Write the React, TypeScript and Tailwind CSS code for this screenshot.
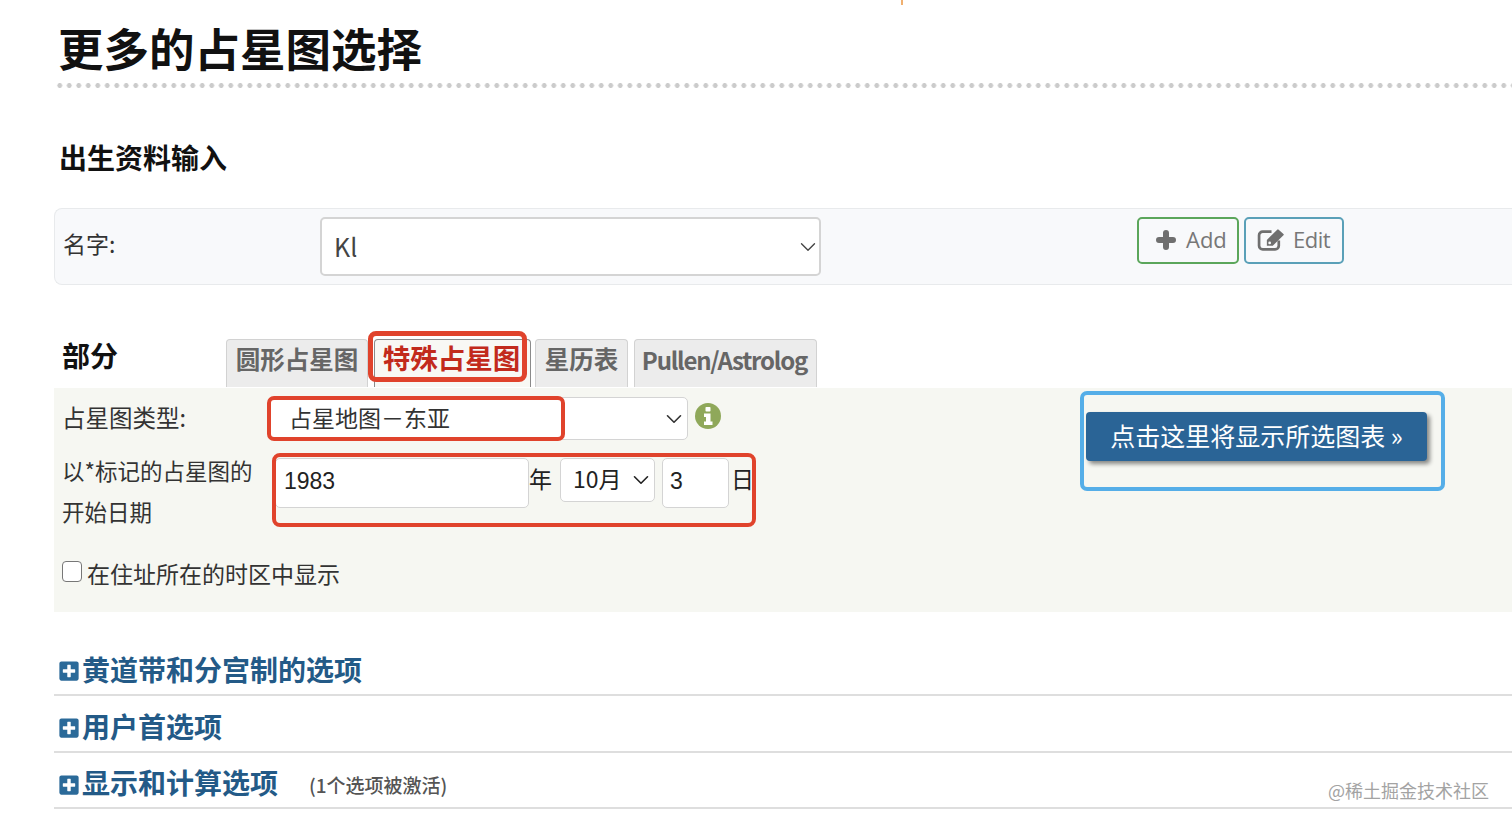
import { ChevronDown } from "lucide-react";
import { FaPlusSquare } from "react-icons/fa";

const cjk = "font-['Noto_Sans_CJK_SC','Noto_Sans',sans-serif]";

function Tab({ label, className }: { label: string; className: string }) {
  return (
    <div
      className={`flex h-[48px] items-center justify-center rounded-t-[4px] border border-b-0 font-bold leading-none ${className}`}
    >
      {label}
    </div>
  );
}

function Section({ label, note, h }: { label: string; note?: string; h: string }) {
  return (
    <div className={`flex items-center border-b-2 border-[#dedede] pl-[4px] pt-[4px] ${h}`}>
      <FaPlusSquare className="mt-[5px] h-[22px] w-[22px] text-[#2b6a99]" />
      <span className="ml-[2px] text-[28px] font-bold leading-none text-[#235a87]">{label}</span>
      {note && (
        <span className="ml-[31px] mt-[4px] text-[19px] font-medium leading-none text-[#555]">{note}</span>
      )}
    </div>
  );
}

function InfoIcon() {
  return (
    <svg viewBox="0 0 26 26" className="ml-[7px] mt-[6px] h-[26px] w-[26px]">
      <circle cx="13" cy="13" r="13" fill="#8fa85a" />
      <rect x="10.5" y="4" width="5" height="4.5" rx="0.8" fill="#fff" />
      <path d="M9 10.5h6.5v8H17.500v3.500H9v-3.500h2v-4.500H9z" fill="#fff" />
    </svg>
  );
}

function PlusIcon() {
  return (
    <svg viewBox="0 0 20 20" className="h-[20px] w-[20px]">
      <path d="M10 3v14M3 10h14" stroke="#6f6f6f" strokeWidth="6" strokeLinecap="round" fill="none" />
    </svg>
  );
}

function EditIcon() {
  return (
    <svg viewBox="0 0 27 22" className="-ml-[1px] h-[23px] w-[28px]">
      <path
        d="M14 3.500H5.500a3.500 3.500 0 0 0-3.500 3.500v10a3.500 3.500 0 0 0 3.500 3.500h12a3.500 3.500 0 0 0 3.500-3.500v-5"
        stroke="#6f6f6f"
        strokeWidth="2.600"
        fill="none"
      />
      <path d="M9.500 11.500 19.500 1.500a1 1 0 0 1 1.400 0l4.600 4.100a1 1 0 0 1 0 1.400L15.200 17H9.500z" fill="#6f6f6f" />
      <circle cx="12.200" cy="14.300" r="1.300" fill="#f8f9fb" />
    </svg>
  );
}

export default function App() {
  return (
    <div className={`relative h-[825px] w-[1512px] overflow-hidden bg-white text-[#222] ${cjk}`}>
      <div className="absolute left-[901px] top-0 h-[5px] w-[2px] bg-[#f0b070]" />

      <div className="pl-[54px]">
        <div className="pt-[20px]">
          <h1 className="ml-[4px] text-[45.500px] font-bold leading-[55px] text-[#111]">更多的占星图选择</h1>
          <div className="ml-[1px] mt-[8px] h-[5px] bg-[radial-gradient(circle,#cbcbcb_2.200px,transparent_2.700px)] bg-[length:9.5px_5px] bg-repeat-x" />
        </div>

        <h2 className="ml-[5px] mt-[49px] text-[28px] font-bold leading-[40px] text-[#111]">出生资料输入</h2>

        <div className="mt-[31px] flex h-[77px] rounded-l-[8px] border border-r-0 border-[#e8eaec] bg-[#f8f9fb] pl-[8px] pt-[8px]">
          <div className="w-[257px] pt-[11px] text-[23px] leading-[30px] text-[#333]">名字:</div>
          <div className="flex h-[59px] w-[501px] items-center justify-between rounded-[5px] border-2 border-[#d4d4d4] bg-white pl-[12px] text-[25px] text-[#444]">
            Kl
            <ChevronDown className="-mr-[2px] h-[26px] w-[26px] text-[#444]" strokeWidth={1.25} />
          </div>
          <div className="ml-[316px] flex gap-[5px] font-['Open_Sans',sans-serif] text-[22px] text-[#777]">
            <div className="flex h-[47px] w-[102px] items-center rounded-[5px] border-2 border-[#5ba65b] pb-[2px] pl-[17px]">
              <PlusIcon />
              <span className="ml-[10px]">Add</span>
            </div>
            <div className="flex h-[47px] w-[100px] items-center rounded-[5px] border-2 border-[#5aa0b8] pb-[2px] pl-[12px]">
              <EditIcon />
              <span className="ml-[8px] tracking-[-0.5px]">Edit</span>
            </div>
          </div>
        </div>

        <div className="mt-[54px] flex h-[49px]">
          <div className="ml-[8px] -mt-[1px] w-[164px] text-[28px] font-bold leading-[34px] text-[#111]">部分</div>
          <div className="relative flex">
            <Tab label="圆形占星图" className="w-[142px] border-[#d2d2d2] bg-[#ececec] pb-[8px] text-[24.500px] text-[#666]" />
            <Tab label="特殊占星图" className="ml-[6px] w-[157px] border-[#8a8a8a] bg-[#f8f8f4] pb-[11px] pr-[2px] text-[27.500px] text-[#c22a1c]" />
            <Tab label="星历表" className="ml-[4px] w-[93px] border-[#d2d2d2] bg-[#ececec] pb-[8px] text-[24.500px] text-[#666]" />
            <Tab label="Pullen/Astrolog" className="ml-[6px] w-[183px] border-[#d2d2d2] bg-[#ececec] pb-[8px] pr-[2px] text-[24px] tracking-[-1.200px] text-[#666]" />
            <div className="absolute left-[142px] top-[-8px] h-[51px] w-[159px] rounded-[8px] border-[5px] border-[#e0432c]" />
          </div>
        </div>

        <div className="flex h-[224px] bg-[#f6f7f2] pl-[8px]">
          <div className="w-[1018px]">
            <div className="flex pt-[9px]">
              <div className="w-[206px] pt-[4px] text-[23.500px] leading-[32px] text-[#333]">占星图类型:</div>
              <div className="relative flex h-[43px] w-[420px] items-center justify-between rounded-[5px] border border-[#d4d4d4] bg-white pl-[20px] text-[23px] text-[#333]">
                <span className="pb-[3px]">占星地图－东亚</span>
                <ChevronDown className="h-[26px] w-[26px] text-[#333]" strokeWidth={1.5} />
                <div className="absolute left-[-2px] top-[-2px] h-[45px] w-[298px] rounded-[7px] border-[4px] border-[#e0432c]" />
              </div>
              <InfoIcon />
            </div>

            <div className="mt-[13px] flex">
              <div className="-mt-[3px] w-[211px] text-[22.500px] leading-[41px] text-[#333]">
                以*标记的占星图的
                <br />
                开始日期
              </div>
              <div className="relative flex h-[70px] w-[484px] items-start pl-[2px] pt-[5px] text-[23px] text-[#222]">
                <div className="absolute left-[-1px] top-0 h-[74px] w-[484px] rounded-[8px] border-[4px] border-[#e0432c]" />
                <div className="flex h-[50px] w-[254px] items-center rounded-[5px] border border-[#d4d4d4] bg-white pb-[4px] pl-[8px] font-['Liberation_Sans',sans-serif] text-[23px]">
                  1983
                </div>
                <span className="mt-[4px] leading-[32px]">年</span>
                <div className="ml-[8px] flex h-[44px] w-[95px] items-center justify-between rounded-[5px] border border-[#d4d4d4] bg-white pl-[12px]">
                  <span className="pb-[3px]">10月</span>
                  <ChevronDown className="h-[26px] w-[26px]" strokeWidth={1.5} />
                </div>
                <div className="ml-[7px] flex h-[50px] w-[67px] items-center rounded-[5px] border border-[#d4d4d4] bg-white pb-[4px] pl-[7px] font-['Liberation_Sans',sans-serif]">
                  3
                </div>
                <span className="ml-[2px] mt-[4px] leading-[32px]">日</span>
              </div>
            </div>

            <div className="mt-[25px] flex items-center">
              <input type="checkbox" className="mb-[4px] h-[21px] w-[20px] appearance-none rounded-[4px] border border-[#777] bg-white" />
              <span className="ml-[5px] text-[23px] leading-[32px] text-[#333]">在住址所在的时区中显示</span>
            </div>
          </div>

          <div className="mt-[3px] h-[100px] w-[365px] rounded-[7px] border-[4px] border-[#55aee8] pl-[2px] pt-[17px]">
            <div className="flex h-[49px] w-[341px] items-center justify-center rounded-[4px] bg-[#2a6496] pb-[2px] text-[25px] text-white shadow-[3px_3px_4px_rgba(0,0,0,0.45)]">
              点击这里将显示所选图表 »
            </div>
          </div>
        </div>

        <div className="mt-[27px]">
          <Section label="黄道带和分宫制的选项" h="h-[57px]" />
          <Section label="用户首选项" h="h-[57px]" />
          <Section label="显示和计算选项" note="(1个选项被激活)" h="h-[56px]" />
        </div>
      </div>

      <div className="absolute left-[1328px] top-[777px] text-[18px] leading-[26px] text-[#a3a3a3]">@稀土掘金技术社区</div>
    </div>
  );
}
